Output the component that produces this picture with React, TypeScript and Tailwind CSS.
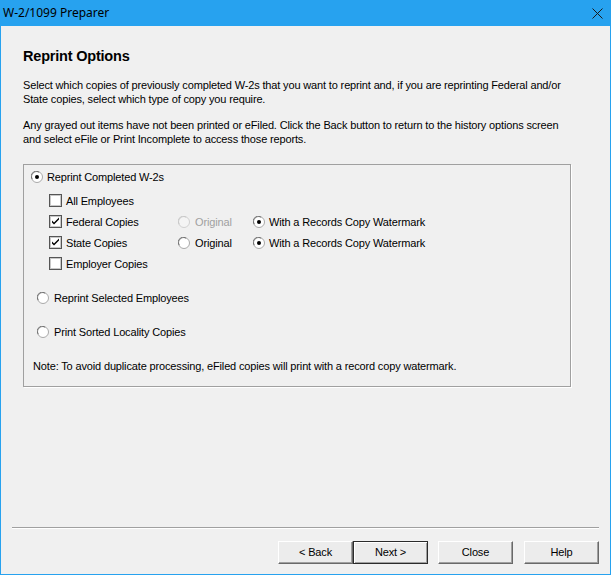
import React from "react";

const Radio = ({ checked = false, disabled = false }: { checked?: boolean; disabled?: boolean }) => (
  <svg width="12" height="12" viewBox="0 0 12 12" className="shrink-0">
    <circle cx="6" cy="6" r="5.5" fill={disabled ? "#f4f4f4" : "#ffffff"} stroke={disabled ? "#d0d0d0" : "#a8a8a8"} />
    <path d="M1.2 8.2 A5 5 0 0 1 8.2 1.2" fill="none" stroke={disabled ? "#c8c8c8" : "#6e6e6e"} strokeWidth="1" />
    {checked && <circle cx="6" cy="6" r="2" fill={disabled ? "#a0a0a0" : "#000000"} />}
  </svg>
);

const Check = ({ checked = false }: { checked?: boolean }) => (
  <svg width="13" height="13" viewBox="0 0 13 13" className="shrink-0">
    <rect x="0.5" y="0.5" width="12" height="12" fill="#ffffff" stroke="#555555" />
    <rect x="1.5" y="1.5" width="10" height="10" fill="none" stroke="#c8c8c8" />
    {checked && <path d="M3 5.5 L3 7.5 L5 9.5 L10 4.5 L10 2.5 L5 7.5 Z" fill="#000000" />}
  </svg>
);

const Btn = ({ label, def = false }: { label: string; def?: boolean }) => (
  <div
    className={
      "flex h-[23px] w-[75px] items-center justify-center bg-[#ececec] text-[11px] tracking-[-0.15px] text-black " +
      (def
        ? "border border-[#2b2b2b] shadow-[inset_1px_1px_#ffffff,inset_-1px_-1px_#a0a0a0]"
        : "border-t border-l border-t-[#ffffff] border-l-[#ffffff] border-r border-b border-r-[#696969] border-b-[#696969] shadow-[inset_-1px_-1px_#a0a0a0]")
    }
  >
    {label}
  </div>
);

export default function App() {
  return (
    <div
      className="flex h-[575px] w-[611px] flex-col bg-[#f0f0f0] text-black"
      style={{ fontFamily: '"Liberation Sans", Arial, sans-serif' }}
    >
      <div className="flex h-[26px] shrink-0 items-center justify-between bg-[#27a2ef] pl-[3px] pr-[8px]">
        <span className="text-[12px]" style={{ fontFamily: '"Noto Sans", "Open Sans", sans-serif' }}>
          W-2/1099 Preparer
        </span>
        <svg width="11" height="11" viewBox="0 0 11 11">
          <path d="M0.5 0.5 L10.5 10.5 M10.5 0.5 L0.5 10.5" stroke="#1a1a1a" strokeWidth="1" />
        </svg>
      </div>
      <div className="flex flex-1 flex-col border-x border-b border-[#27a2ef]">
        <div className="flex flex-col pl-[22px] pr-[42px] text-[11px] leading-[14px] tracking-[-0.15px]">
          <div className="mt-[22px] h-[17px] text-[14.5px] font-bold leading-[17px] tracking-[-0.2px]">
            Reprint Options
          </div>
          <p className="mt-[13px]">
            Select which copies of previously completed W-2s that you want to reprint and, if you are reprinting Federal and/or State copies, select which type of copy you require.
          </p>
          <p className="mt-[12px]">
            Any grayed out items have not been printed or eFiled. Click the Back button to return to the history options screen and select eFile or Print Incomplete to access those reports.
          </p>
        </div>
        <div className="ml-[22px] mt-[18px] flex h-[223px] w-[548px] flex-col border border-[#a0a0a0] shadow-[1px_1px_#ffffff] text-[11px] leading-[14px] tracking-[-0.15px]">
          <div className="ml-[7px] mt-[5px] flex h-[14px] items-center gap-[4px]">
            <Radio checked />
            <span>Reprint Completed W-2s</span>
          </div>
          <div className="ml-[25px] mt-[6px] flex flex-col">
            <div className="flex h-[21px] items-center gap-[4px]">
              <Check />
              <span>All Employees</span>
            </div>
            <div className="flex h-[21px] items-center">
              <div className="flex w-[129px] items-center gap-[4px]">
                <Check checked />
                <span>Federal Copies</span>
              </div>
              <div className="flex w-[75px] items-center gap-[5px] text-[#a0a0a0]">
                <Radio disabled />
                <span>Original</span>
              </div>
              <div className="flex items-center gap-[4px]">
                <Radio checked />
                <span>With a Records Copy Watermark</span>
              </div>
            </div>
            <div className="flex h-[21px] items-center">
              <div className="flex w-[129px] items-center gap-[4px]">
                <Check checked />
                <span>State Copies</span>
              </div>
              <div className="flex w-[75px] items-center gap-[5px]">
                <Radio />
                <span>Original</span>
              </div>
              <div className="flex items-center gap-[4px]">
                <Radio checked />
                <span>With a Records Copy Watermark</span>
              </div>
            </div>
            <div className="flex h-[21px] items-center gap-[4px]">
              <Check />
              <span>Employer Copies</span>
            </div>
          </div>
          <div className="ml-[13px] mt-[17px] flex h-[14px] items-center gap-[5px]">
            <Radio />
            <span>Reprint Selected Employees</span>
          </div>
          <div className="ml-[13px] mt-[20px] flex h-[14px] items-center gap-[5px]">
            <Radio />
            <span>Print Sorted Locality Copies</span>
          </div>
          <div className="ml-[9px] mt-[20px] h-[14px]">
            Note: To avoid duplicate processing, eFiled copies will print with a record copy watermark.
          </div>
        </div>
        <div className="flex-1" />
        <div className="mx-[11px] h-[2px] border-t border-b border-t-[#a0a0a0] border-b-[#ffffff]" />
        <div className="mb-[10px] mt-[12px] flex justify-end pr-[11px]">
          <Btn label="< Back" />
          <Btn label="Next >" def />
          <div className="w-[10px]" />
          <Btn label="Close" />
          <div className="w-[11px]" />
          <Btn label="Help" />
        </div>
      </div>
    </div>
  );
}
